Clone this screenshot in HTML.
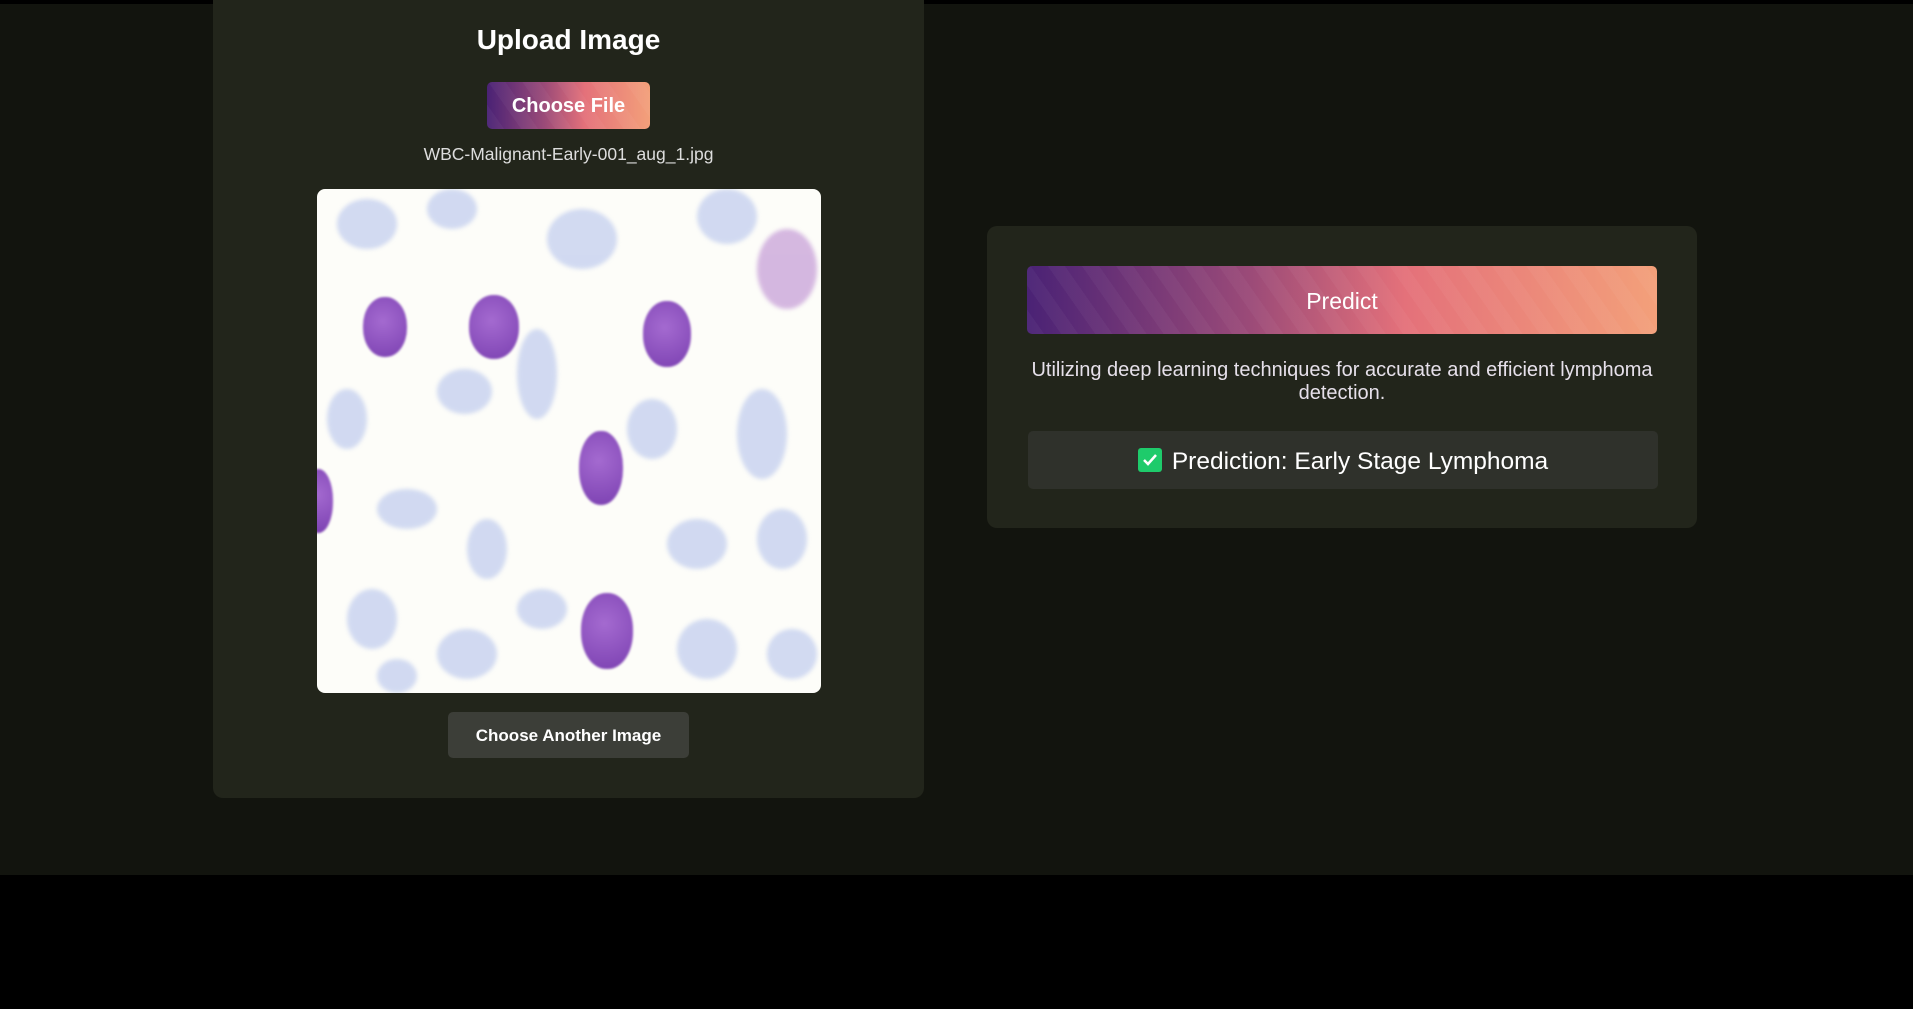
<!DOCTYPE html>
<html><head><style>
html,body{margin:0;padding:0}
body{width:1913px;height:1009px;background:#000;font-family:"Liberation Sans",sans-serif;position:relative;overflow:hidden}
.bg{position:absolute;left:0;top:4px;width:1913px;height:871px;background:#12140e}
.panel{position:absolute;background:#22251b;border-radius:10px}
.stripes{background-image:repeating-linear-gradient(55deg,rgba(255,255,255,0.035) 0 14px,rgba(0,0,0,0) 14px 28px),linear-gradient(90deg,#4a2275 0%,#9a4a78 35%,#e4717a 60%,#f3a07a 100%)}
.c{position:absolute;text-align:center;color:#fff}
.img{position:absolute;left:317px;top:189px;width:504px;height:504px;border-radius:8px;overflow:hidden;background:#fdfdf9}
.b{position:absolute;border-radius:50%;background:#bfcbee;opacity:.7;filter:blur(2px)}
.p{position:absolute;border-radius:48%;background:radial-gradient(circle at 45% 40%,#a46ad0,#7a3fb0);filter:blur(1px)}
</style></head><body>
<div class="bg"></div>
<div class="panel" style="left:213px;top:0;width:711px;height:798px;border-radius:0 0 10px 10px"></div>
<div class="c" style="left:213px;width:711px;top:24px;font-size:28px;font-weight:bold">Upload Image</div>
<div class="stripes" style="position:absolute;left:487px;top:82px;width:163px;height:47px;border-radius:5px"></div>
<div class="c" style="left:487px;width:163px;top:95px;font-size:20px;font-weight:bold">Choose File</div>
<div class="c" style="left:213px;width:711px;top:144px;font-size:17.5px;color:#ddd">WBC-Malignant-Early-001_aug_1.jpg</div>
<div class="img">
<div class="b" style="left:20px;top:10px;width:60px;height:50px"></div>
<div class="b" style="left:110px;top:0;width:50px;height:40px"></div>
<div class="b" style="left:230px;top:20px;width:70px;height:60px"></div>
<div class="b" style="left:380px;top:0;width:60px;height:55px"></div>
<div class="b" style="left:440px;top:40px;width:60px;height:80px;background:#c49ad6"></div>
<div class="b" style="left:120px;top:180px;width:55px;height:45px"></div>
<div class="b" style="left:200px;top:140px;width:40px;height:90px"></div>
<div class="b" style="left:310px;top:210px;width:50px;height:60px"></div>
<div class="b" style="left:420px;top:200px;width:50px;height:90px"></div>
<div class="b" style="left:10px;top:200px;width:40px;height:60px"></div>
<div class="b" style="left:60px;top:300px;width:60px;height:40px"></div>
<div class="b" style="left:150px;top:330px;width:40px;height:60px"></div>
<div class="b" style="left:350px;top:330px;width:60px;height:50px"></div>
<div class="b" style="left:440px;top:320px;width:50px;height:60px"></div>
<div class="b" style="left:30px;top:400px;width:50px;height:60px"></div>
<div class="b" style="left:120px;top:440px;width:60px;height:50px"></div>
<div class="b" style="left:200px;top:400px;width:50px;height:40px"></div>
<div class="b" style="left:360px;top:430px;width:60px;height:60px"></div>
<div class="b" style="left:450px;top:440px;width:50px;height:50px"></div>
<div class="b" style="left:60px;top:470px;width:40px;height:34px"></div>
<div class="p" style="left:46px;top:108px;width:44px;height:60px"></div>
<div class="p" style="left:152px;top:106px;width:50px;height:64px"></div>
<div class="p" style="left:326px;top:112px;width:48px;height:66px"></div>
<div class="p" style="left:262px;top:242px;width:44px;height:74px"></div>
<div class="p" style="left:264px;top:404px;width:52px;height:76px"></div>
<div class="p" style="left:-14px;top:280px;width:30px;height:64px"></div>
</div>
<div style="position:absolute;left:448px;top:712px;width:241px;height:46px;background:#3c3e38;border-radius:5px"></div>
<div class="c" style="left:448px;width:241px;top:726px;font-size:17px;font-weight:bold">Choose Another Image</div>
<div class="panel" style="left:987px;top:226px;width:710px;height:302px"></div>
<div class="stripes" style="position:absolute;left:1027px;top:266px;width:630px;height:68px;border-radius:5px"></div>
<div class="c" style="left:1027px;width:630px;top:288px;font-size:23px">Predict</div>
<div class="c" style="left:1020px;width:644px;top:359px;font-size:20px;line-height:23px;color:#e6e0ea">Utilizing deep learning techniques for accurate and efficient lymphoma detection.</div>
<div style="position:absolute;left:1028px;top:431px;width:630px;height:58px;background:#2f312b;border-radius:5px"></div>
<div class="c" style="left:1028px;width:630px;top:448px;font-size:24.5px"><span style="display:inline-block;width:24px;height:24px;background:#1ecb6b;border-radius:3px;vertical-align:-3px;margin-right:10px;position:relative"><svg width="24" height="24" viewBox="0 0 24 24" style="position:absolute;left:0;top:0"><path d="M6 12l4 4 8-9" stroke="#fff" stroke-width="2.5" fill="none"/></svg></span>Prediction: Early Stage Lymphoma</div>
</body></html>
